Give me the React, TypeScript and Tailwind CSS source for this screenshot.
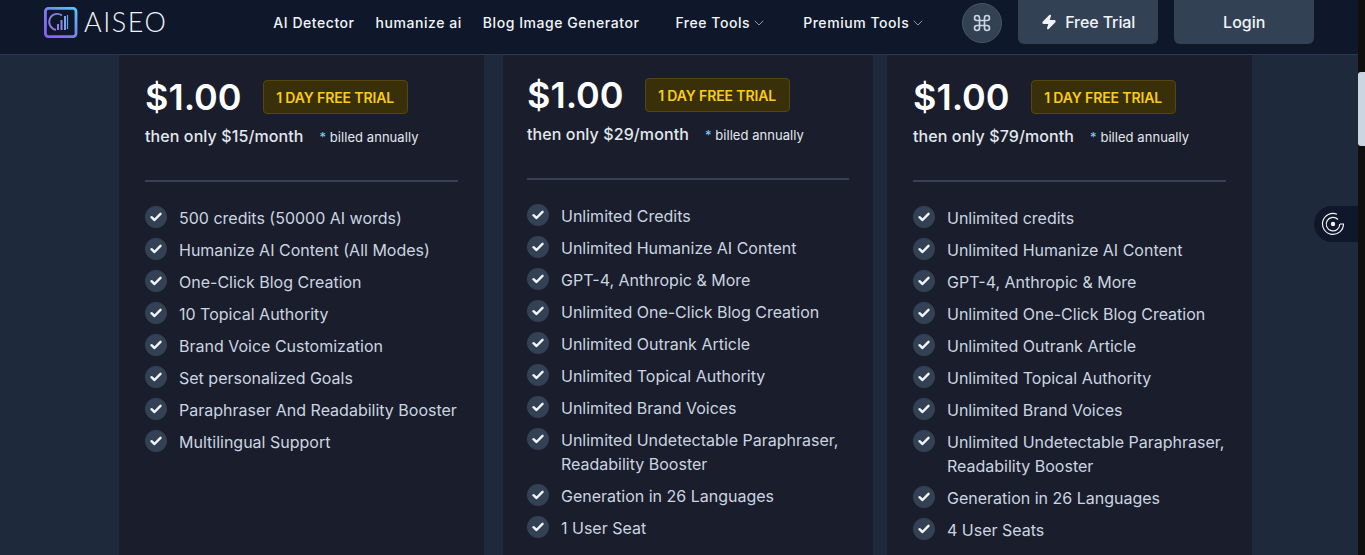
import { ChevronDown, Command, Zap } from "lucide-react";

const font = { fontFamily: "Inter, sans-serif" };

type Plan = {
  width: string;
  pad: string;
  month: string;
  items: string[];
};

const plans: Plan[] = [
  {
    width: "w-[365px]",
    pad: "pl-[26px] pr-[26px] pt-[20px]",
    month: "$15",
    items: [
      "500 credits (50000 AI words)",
      "Humanize AI Content (All Modes)",
      "One-Click Blog Creation",
      "10 Topical Authority",
      "Brand Voice Customization",
      "Set personalized Goals",
      "Paraphraser And Readability Booster",
      "Multilingual Support",
    ],
  },
  {
    width: "w-[370px]",
    pad: "pl-[24px] pr-[24px] pt-[18px]",
    month: "$29",
    items: [
      "Unlimited Credits",
      "Unlimited Humanize AI Content",
      "GPT-4, Anthropic & More",
      "Unlimited One-Click Blog Creation",
      "Unlimited Outrank Article",
      "Unlimited Topical Authority",
      "Unlimited Brand Voices",
      "Unlimited Undetectable Paraphraser, Readability Booster",
      "Generation in 26 Languages",
      "1 User Seat",
    ],
  },
  {
    width: "w-[365px]",
    pad: "pl-[26px] pr-[26px] pt-[20px]",
    month: "$79",
    items: [
      "Unlimited credits",
      "Unlimited Humanize AI Content",
      "GPT-4, Anthropic & More",
      "Unlimited One-Click Blog Creation",
      "Unlimited Outrank Article",
      "Unlimited Topical Authority",
      "Unlimited Brand Voices",
      "Unlimited Undetectable Paraphraser, Readability Booster",
      "Generation in 26 Languages",
      "4 User Seats",
    ],
  },
];

function Logo() {
  return (
    <svg width="34" height="31" viewBox="0 0 34 31" fill="none" className="shrink-0">
      <defs>
        <linearGradient id="lg" x1="0" y1="1" x2="1" y2="0">
          <stop offset="0" stopColor="#8b5cf6" />
          <stop offset="0.45" stopColor="#7c7cf0" />
          <stop offset="1" stopColor="#56c8f5" />
        </linearGradient>
      </defs>
      <rect x="1.4" y="1.4" width="30.6" height="28.2" rx="3" stroke="url(#lg)" strokeWidth="2.8" />
      <path d="M18 8.5 A8 8 0 1 0 12 22.8" stroke="#8b7fd8" strokeWidth="1.8" />
      <rect x="13" y="17" width="2" height="6" fill="#9a78ee" />
      <rect x="16.5" y="13" width="2" height="10" fill="#8f86ea" />
      <rect x="20" y="9" width="2" height="14" fill="#7ea0ee" />
      <path d="M23.5 8 V22" stroke="#62a8e0" strokeWidth="1.2" />
    </svg>
  );
}

function CheckDot() {
  return (
    <span className="flex h-[22px] w-[22px] shrink-0 items-center justify-center rounded-full bg-[#334155]">
      <svg width="12" height="10" viewBox="0 0 12 10" fill="none">
        <path d="M1.5 5.2 L4.5 8 L10.5 1.8" stroke="#f1f5f9" strokeWidth="2.4" strokeLinecap="round" strokeLinejoin="round" />
      </svg>
    </span>
  );
}

function Card({ plan }: { plan: Plan }) {
  return (
    <section className={`${plan.width} ${plan.pad} h-[520px] shrink-0 bg-[#1a1d2b]`}>
      <div className="flex items-center">
        <div className="text-[36px] font-semibold leading-[44px] text-white">$1.00</div>
        <div className="ml-[21px] flex h-[34px] w-[145px] items-center justify-center rounded-[4px] border border-[#53470f] bg-[#393009] text-[14px] font-semibold tracking-[-0.12px] text-[#facc15]">
          1 DAY FREE TRIAL
        </div>
      </div>
      <div className="mt-[5px] flex h-[24px] items-center">
        <span className="text-[16px] font-medium tracking-[0.1px] text-[#e2e8f0]">then only {plan.month}/month</span>
        <span className="ml-[16px] mt-[3px] text-[13px] tracking-[0.05px] text-[#e2e8f0]">
          <span className="text-[#7dd3fc]">*</span> billed annually
        </span>
      </div>
      <div className="mt-[32px] h-[2px] bg-[#374151]" />
      <ul className="mt-[24px] flex flex-col gap-[8px]">
        {plan.items.map((t) => (
          <li key={t} className="flex items-start gap-[12px]">
            <CheckDot />
            <span className="text-[16px] leading-[24px] text-[#cbd5e1]">{t}</span>
          </li>
        ))}
      </ul>
    </section>
  );
}

export default function App() {
  return (
    <div style={font} className="flex h-[555px] w-[1365px] overflow-hidden bg-[#0f0f0f]">
      <div className="relative h-full w-[1358px] shrink-0 bg-[#1e293b]">
        <header className="flex h-[55px] items-center border-b border-[#2b3a50] bg-[#0f172a] pb-[10px] pl-[44px]">
          <Logo />
          <span style={{ fontFamily: "Lato, sans-serif" }} className="ml-[6px] -translate-y-px text-[27px] font-light leading-none tracking-[1.5px] text-[#f1f5f9]">
            AISEO
          </span>
          <nav className="ml-[106px] flex items-center text-[14px] font-medium tracking-[0.55px] text-[#f1f5f9]">
            <a>AI Detector</a>
            <a className="ml-[21px]">humanize ai</a>
            <a className="ml-[21px]">Blog Image Generator</a>
            <a className="ml-[36px] flex items-center gap-[1px]">
              Free Tools <ChevronDown size={16} strokeWidth={1.4} className="mt-[2px] text-[#94a3b8]" />
            </a>
            <a className="ml-[36px] flex items-center gap-[1px]">
              Premium Tools <ChevronDown size={16} strokeWidth={1.4} className="mt-[2px] text-[#94a3b8]" />
            </a>
          </nav>
          <div className="ml-[36px] mt-[3px] flex h-[40px] w-[40px] items-center justify-center self-start rounded-full border border-[#475569] bg-[#334155]">
            <Command size={20} className="text-[#cbd5e1]" />
          </div>
          <button className="ml-[16px] flex h-[44px] w-[140px] items-center justify-center gap-[8px] self-start rounded-b-[6px] bg-[#334155] text-[16px] font-medium tracking-[-0.1px] text-[#f1f5f9]">
            <Zap size={16} fill="currentColor" /> Free Trial
          </button>
          <button className="ml-[16px] h-[44px] w-[140px] self-start rounded-b-[6px] bg-[#334155] text-[16px] font-medium text-[#f1f5f9]">
            Login
          </button>
        </header>
        <main className="flex pl-[119px]">
          <Card plan={plans[0]} />
          <div className="w-[19px] shrink-0" />
          <Card plan={plans[1]} />
          <div className="w-[14px] shrink-0" />
          <Card plan={plans[2]} />
        </main>
        <div className="absolute right-0 top-[206px] flex h-[36px] w-[44px] items-center rounded-l-full bg-[#0f172a] pl-[7px]">
          <svg width="24" height="24" viewBox="0 0 24 24" fill="none" stroke="#f1f5f9" strokeWidth="1.2">
            <path d="M16 2.2 A10.5 10.5 0 1 0 22.5 12 H19" />
            <path d="M17 7.5 A6.8 6.8 0 1 0 18.8 12" />
            <circle cx="12" cy="12" r="2.2" fill="#f1f5f9" stroke="none" />
          </svg>
        </div>
      </div>
      <aside className="h-full w-[7px] shrink-0 pt-[72px]">
        <div className="h-[74px] rounded-l-[3px] bg-[#cbd5e1]" />
      </aside>
    </div>
  );
}
